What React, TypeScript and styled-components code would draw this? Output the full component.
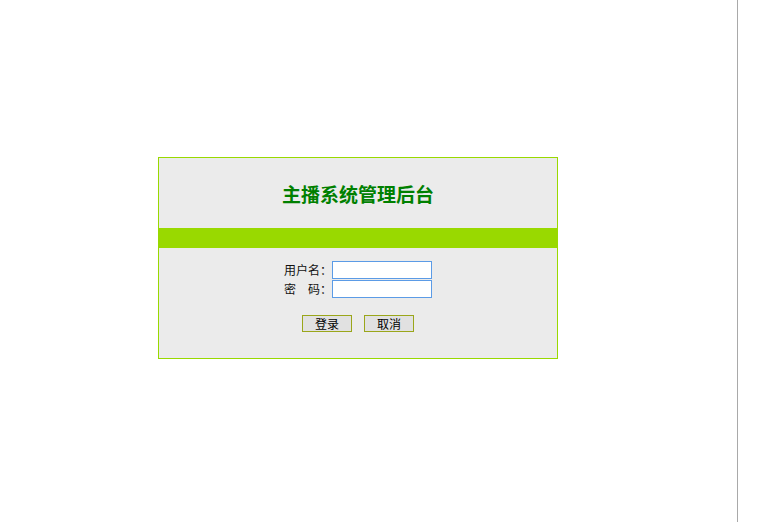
import React from "react";
import styled, { createGlobalStyle } from "styled-components";

const Global = createGlobalStyle`
  html, body { margin: 0; padding: 0; background: #ffffff; }
  body { font-family: "Noto Sans CJK SC", "Liberation Sans", sans-serif; font-size: 12px; color: #000; }
`;

const Page = styled.div`
  display: flex;
  height: 522px;
  overflow: hidden;
`;

const Main = styled.div`
  width: 737px;
  box-sizing: border-box;
  padding: 157px 0 0 158px;
`;

const Divider = styled.div`
  width: 1px;
  background: #a9a9a9;
  flex-shrink: 0;
`;

const Box = styled.div`
  width: 400px;
  box-sizing: border-box;
  border: 1px solid #99d900;
  background: #ebebeb;
  display: flex;
  flex-direction: column;
`;

const Header = styled.div`
  height: 70px;
  display: flex;
  align-items: center;
  justify-content: center;
`;

const Title = styled.h1`
  margin: 0;
  font-size: 19px;
  font-weight: bold;
  color: #008000;
  line-height: 1;
`;

const Bar = styled.div`
  height: 20px;
  background: #99d900;
`;

const Body = styled.div`
  height: 110px;
  box-sizing: border-box;
  padding-top: 13px;
  display: flex;
  flex-direction: column;
  align-items: center;
`;

const Form = styled.div`
  display: grid;
  grid-template-columns: 48px 100px;
  row-gap: 1px;
  align-items: center;
`;

const Label = styled.label`
  font-size: 12px;
  line-height: 18px;
  white-space: pre;
  color: #111;
`;

const Input = styled.input`
  width: 100px;
  height: 18px;
  box-sizing: border-box;
  border: 1px solid #5b9be6;
  background: #fff;
  padding: 0 2px;
  margin: 0;
  outline: none;
  font-size: 12px;
`;

const Buttons = styled.div`
  display: flex;
  gap: 12px;
  margin-top: 17px;
`;

const Button = styled.button`
  width: 50px;
  height: 17px;
  box-sizing: border-box;
  border: 1px solid #9aa61a;
  background: #e1e1e1;
  padding: 0;
  margin: 0;
  font-family: "Noto Sans CJK SC", sans-serif;
  font-size: 12px;
  line-height: 15px;
  color: #000;
  cursor: pointer;
`;

export default function App() {
  return (
    <Page>
      <Global />
      <Main>
        <Box>
          <Header>
            <Title>主播系统管理后台</Title>
          </Header>
          <Bar />
          <Body>
            <Form>
              <Label htmlFor="u">用户名：</Label>
              <Input id="u" type="text" />
              <Label htmlFor="p">{"密　码："}</Label>
              <Input id="p" type="password" />
            </Form>
            <Buttons>
              <Button type="button">登录</Button>
              <Button type="button">取消</Button>
            </Buttons>
          </Body>
        </Box>
      </Main>
      <Divider />
    </Page>
  );
}
